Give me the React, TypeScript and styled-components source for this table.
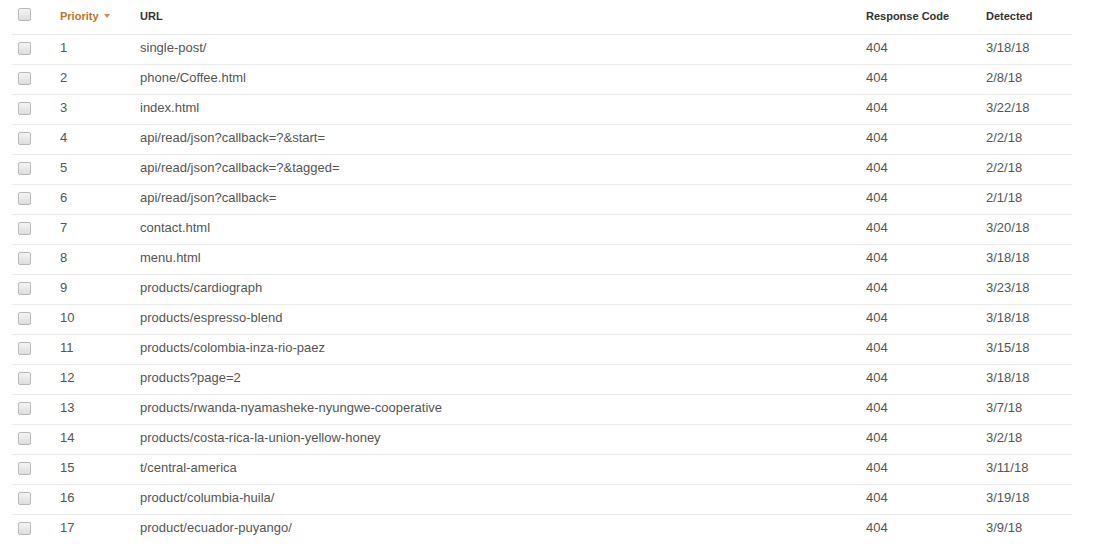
import React from 'react';
import styled, { createGlobalStyle } from 'styled-components';

const GlobalStyle = createGlobalStyle`
  html, body {
    margin: 0;
    padding: 0;
    background: #fff;
  }
  body {
    font-family: "Liberation Sans", Arial, sans-serif;
  }
`;

const Page = styled.div`
  padding: 0 34px 0 12px;
  width: 1060px;
`;

const Table = styled.table`
  width: 1060px;
  border-collapse: collapse;
  table-layout: fixed;
`;

// heights below are content heights: padding + border make 34px / 30px rows
const HeadCell = styled.th<{ $width?: number; $active?: boolean }>`
  width: ${p => (p.$width ? `${p.$width}px` : 'auto')};
  height: 32px;
  padding: 0 0 2px;
  text-align: left;
  vertical-align: middle;
  font-size: 11px;
  font-weight: bold;
  color: ${p => (p.$active ? '#b8742e' : '#333')};
  border-bottom: 1px solid #e8e8e8;
  white-space: nowrap;
`;

const HeadCheckCell = styled.th`
  width: 42px;
  height: 28px;
  padding: 0 0 6px 6px;
  text-align: left;
  vertical-align: middle;
  border-bottom: 1px solid #e8e8e8;
`;

const Cell = styled.td`
  height: 25px;
  padding: 0 0 4px;
  font-size: 13px;
  color: #555;
  vertical-align: middle;
  border-bottom: 1px solid #ebebeb;
  white-space: nowrap;
`;

const CheckCell = styled.td`
  height: 27px;
  padding: 0 0 2px 6px;
  vertical-align: middle;
  border-bottom: 1px solid #ebebeb;
`;

const Check = styled.span`
  display: block;
  width: 11px;
  height: 11px;
  border: 1px solid #b9b9b9;
  border-radius: 2px;
  background: linear-gradient(#f4f4f4, #dedede);
`;

const Caret = styled.span`
  display: inline-block;
  margin-left: 5px;
  width: 0;
  height: 0;
  border-left: 3.5px solid transparent;
  border-right: 3.5px solid transparent;
  border-top: 4px solid #c8905a;
  vertical-align: 2px;
`;

const rows: [string, string][] = [
  ['single-post/', '3/18/18'],
  ['phone/Coffee.html', '2/8/18'],
  ['index.html', '3/22/18'],
  ['api/read/json?callback=?&start=', '2/2/18'],
  ['api/read/json?callback=?&tagged=', '2/2/18'],
  ['api/read/json?callback=', '2/1/18'],
  ['contact.html', '3/20/18'],
  ['menu.html', '3/18/18'],
  ['products/cardiograph', '3/23/18'],
  ['products/espresso-blend', '3/18/18'],
  ['products/colombia-inza-rio-paez', '3/15/18'],
  ['products?page=2', '3/18/18'],
  ['products/rwanda-nyamasheke-nyungwe-cooperative', '3/7/18'],
  ['products/costa-rica-la-union-yellow-honey', '3/2/18'],
  ['t/central-america', '3/11/18'],
  ['product/columbia-huila/', '3/19/18'],
  ['product/ecuador-puyango/', '3/9/18'],
];

export default function App() {
  return (
    <Page>
      <GlobalStyle />
      <Table>
        <thead>
          <tr>
            <HeadCheckCell>
              <Check />
            </HeadCheckCell>
            <HeadCell $width={80} $active>
              Priority
              <Caret />
            </HeadCell>
            <HeadCell>URL</HeadCell>
            <HeadCell $width={120}>Response Code</HeadCell>
            <HeadCell $width={86}>Detected</HeadCell>
          </tr>
        </thead>
        <tbody>
          {rows.map(([url, date], i) => (
            <tr key={url}>
              <CheckCell>
                <Check />
              </CheckCell>
              <Cell>{i + 1}</Cell>
              <Cell>{url}</Cell>
              <Cell>404</Cell>
              <Cell>{date}</Cell>
            </tr>
          ))}
        </tbody>
      </Table>
    </Page>
  );
}
